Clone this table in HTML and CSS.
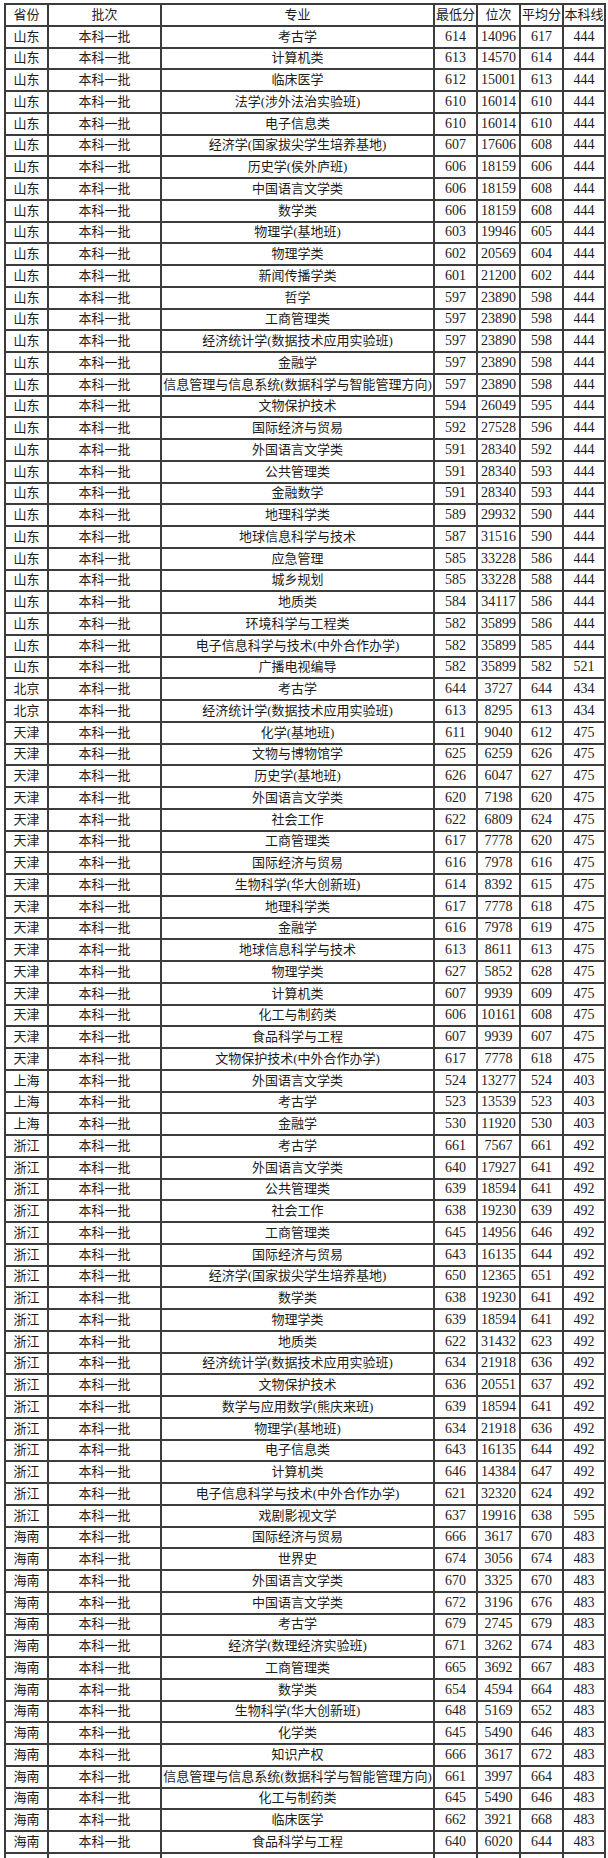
FILE: index.html
```html
<!DOCTYPE html>
<html lang="zh-CN">
<head>
<meta charset="utf-8">
<title>录取分数</title>
<link rel="stylesheet" href="styles.css">
</head>
<body>
<table class="scores">
<colgroup>
<col class="c-prov"><col class="c-batch"><col class="c-major"><col class="c-num"><col class="c-num"><col class="c-num"><col class="c-line">
</colgroup>
<thead>
<tr><th>省份</th><th>批次</th><th>专业</th><th>最低分</th><th>位次</th><th>平均分</th><th>本科线</th></tr>
</thead>
<tbody>
<tr><td>山东</td><td>本科一批</td><td>考古学</td><td>614</td><td>14096</td><td>617</td><td>444</td></tr>
<tr><td>山东</td><td>本科一批</td><td>计算机类</td><td>613</td><td>14570</td><td>614</td><td>444</td></tr>
<tr><td>山东</td><td>本科一批</td><td>临床医学</td><td>612</td><td>15001</td><td>613</td><td>444</td></tr>
<tr><td>山东</td><td>本科一批</td><td>法学(涉外法治实验班)</td><td>610</td><td>16014</td><td>610</td><td>444</td></tr>
<tr><td>山东</td><td>本科一批</td><td>电子信息类</td><td>610</td><td>16014</td><td>610</td><td>444</td></tr>
<tr><td>山东</td><td>本科一批</td><td>经济学(国家拔尖学生培养基地)</td><td>607</td><td>17606</td><td>608</td><td>444</td></tr>
<tr><td>山东</td><td>本科一批</td><td>历史学(侯外庐班)</td><td>606</td><td>18159</td><td>606</td><td>444</td></tr>
<tr><td>山东</td><td>本科一批</td><td>中国语言文学类</td><td>606</td><td>18159</td><td>608</td><td>444</td></tr>
<tr><td>山东</td><td>本科一批</td><td>数学类</td><td>606</td><td>18159</td><td>608</td><td>444</td></tr>
<tr><td>山东</td><td>本科一批</td><td>物理学(基地班)</td><td>603</td><td>19946</td><td>605</td><td>444</td></tr>
<tr><td>山东</td><td>本科一批</td><td>物理学类</td><td>602</td><td>20569</td><td>604</td><td>444</td></tr>
<tr><td>山东</td><td>本科一批</td><td>新闻传播学类</td><td>601</td><td>21200</td><td>602</td><td>444</td></tr>
<tr><td>山东</td><td>本科一批</td><td>哲学</td><td>597</td><td>23890</td><td>598</td><td>444</td></tr>
<tr><td>山东</td><td>本科一批</td><td>工商管理类</td><td>597</td><td>23890</td><td>598</td><td>444</td></tr>
<tr><td>山东</td><td>本科一批</td><td>经济统计学(数据技术应用实验班)</td><td>597</td><td>23890</td><td>598</td><td>444</td></tr>
<tr><td>山东</td><td>本科一批</td><td>金融学</td><td>597</td><td>23890</td><td>598</td><td>444</td></tr>
<tr><td>山东</td><td>本科一批</td><td>信息管理与信息系统(数据科学与智能管理方向)</td><td>597</td><td>23890</td><td>598</td><td>444</td></tr>
<tr><td>山东</td><td>本科一批</td><td>文物保护技术</td><td>594</td><td>26049</td><td>595</td><td>444</td></tr>
<tr><td>山东</td><td>本科一批</td><td>国际经济与贸易</td><td>592</td><td>27528</td><td>596</td><td>444</td></tr>
<tr><td>山东</td><td>本科一批</td><td>外国语言文学类</td><td>591</td><td>28340</td><td>592</td><td>444</td></tr>
<tr><td>山东</td><td>本科一批</td><td>公共管理类</td><td>591</td><td>28340</td><td>593</td><td>444</td></tr>
<tr><td>山东</td><td>本科一批</td><td>金融数学</td><td>591</td><td>28340</td><td>593</td><td>444</td></tr>
<tr><td>山东</td><td>本科一批</td><td>地理科学类</td><td>589</td><td>29932</td><td>590</td><td>444</td></tr>
<tr><td>山东</td><td>本科一批</td><td>地球信息科学与技术</td><td>587</td><td>31516</td><td>590</td><td>444</td></tr>
<tr><td>山东</td><td>本科一批</td><td>应急管理</td><td>585</td><td>33228</td><td>586</td><td>444</td></tr>
<tr><td>山东</td><td>本科一批</td><td>城乡规划</td><td>585</td><td>33228</td><td>588</td><td>444</td></tr>
<tr><td>山东</td><td>本科一批</td><td>地质类</td><td>584</td><td>34117</td><td>586</td><td>444</td></tr>
<tr><td>山东</td><td>本科一批</td><td>环境科学与工程类</td><td>582</td><td>35899</td><td>586</td><td>444</td></tr>
<tr><td>山东</td><td>本科一批</td><td>电子信息科学与技术(中外合作办学)</td><td>582</td><td>35899</td><td>585</td><td>444</td></tr>
<tr><td>山东</td><td>本科一批</td><td>广播电视编导</td><td>582</td><td>35899</td><td>582</td><td>521</td></tr>
<tr><td>北京</td><td>本科一批</td><td>考古学</td><td>644</td><td>3727</td><td>644</td><td>434</td></tr>
<tr><td>北京</td><td>本科一批</td><td>经济统计学(数据技术应用实验班)</td><td>613</td><td>8295</td><td>613</td><td>434</td></tr>
<tr><td>天津</td><td>本科一批</td><td>化学(基地班)</td><td>611</td><td>9040</td><td>612</td><td>475</td></tr>
<tr><td>天津</td><td>本科一批</td><td>文物与博物馆学</td><td>625</td><td>6259</td><td>626</td><td>475</td></tr>
<tr><td>天津</td><td>本科一批</td><td>历史学(基地班)</td><td>626</td><td>6047</td><td>627</td><td>475</td></tr>
<tr><td>天津</td><td>本科一批</td><td>外国语言文学类</td><td>620</td><td>7198</td><td>620</td><td>475</td></tr>
<tr><td>天津</td><td>本科一批</td><td>社会工作</td><td>622</td><td>6809</td><td>624</td><td>475</td></tr>
<tr><td>天津</td><td>本科一批</td><td>工商管理类</td><td>617</td><td>7778</td><td>620</td><td>475</td></tr>
<tr><td>天津</td><td>本科一批</td><td>国际经济与贸易</td><td>616</td><td>7978</td><td>616</td><td>475</td></tr>
<tr><td>天津</td><td>本科一批</td><td>生物科学(华大创新班)</td><td>614</td><td>8392</td><td>615</td><td>475</td></tr>
<tr><td>天津</td><td>本科一批</td><td>地理科学类</td><td>617</td><td>7778</td><td>618</td><td>475</td></tr>
<tr><td>天津</td><td>本科一批</td><td>金融学</td><td>616</td><td>7978</td><td>619</td><td>475</td></tr>
<tr><td>天津</td><td>本科一批</td><td>地球信息科学与技术</td><td>613</td><td>8611</td><td>613</td><td>475</td></tr>
<tr><td>天津</td><td>本科一批</td><td>物理学类</td><td>627</td><td>5852</td><td>628</td><td>475</td></tr>
<tr><td>天津</td><td>本科一批</td><td>计算机类</td><td>607</td><td>9939</td><td>609</td><td>475</td></tr>
<tr><td>天津</td><td>本科一批</td><td>化工与制药类</td><td>606</td><td>10161</td><td>608</td><td>475</td></tr>
<tr><td>天津</td><td>本科一批</td><td>食品科学与工程</td><td>607</td><td>9939</td><td>607</td><td>475</td></tr>
<tr><td>天津</td><td>本科一批</td><td>文物保护技术(中外合作办学)</td><td>617</td><td>7778</td><td>618</td><td>475</td></tr>
<tr><td>上海</td><td>本科一批</td><td>外国语言文学类</td><td>524</td><td>13277</td><td>524</td><td>403</td></tr>
<tr><td>上海</td><td>本科一批</td><td>考古学</td><td>523</td><td>13539</td><td>523</td><td>403</td></tr>
<tr><td>上海</td><td>本科一批</td><td>金融学</td><td>530</td><td>11920</td><td>530</td><td>403</td></tr>
<tr><td>浙江</td><td>本科一批</td><td>考古学</td><td>661</td><td>7567</td><td>661</td><td>492</td></tr>
<tr><td>浙江</td><td>本科一批</td><td>外国语言文学类</td><td>640</td><td>17927</td><td>641</td><td>492</td></tr>
<tr><td>浙江</td><td>本科一批</td><td>公共管理类</td><td>639</td><td>18594</td><td>641</td><td>492</td></tr>
<tr><td>浙江</td><td>本科一批</td><td>社会工作</td><td>638</td><td>19230</td><td>639</td><td>492</td></tr>
<tr><td>浙江</td><td>本科一批</td><td>工商管理类</td><td>645</td><td>14956</td><td>646</td><td>492</td></tr>
<tr><td>浙江</td><td>本科一批</td><td>国际经济与贸易</td><td>643</td><td>16135</td><td>644</td><td>492</td></tr>
<tr><td>浙江</td><td>本科一批</td><td>经济学(国家拔尖学生培养基地)</td><td>650</td><td>12365</td><td>651</td><td>492</td></tr>
<tr><td>浙江</td><td>本科一批</td><td>数学类</td><td>638</td><td>19230</td><td>641</td><td>492</td></tr>
<tr><td>浙江</td><td>本科一批</td><td>物理学类</td><td>639</td><td>18594</td><td>641</td><td>492</td></tr>
<tr><td>浙江</td><td>本科一批</td><td>地质类</td><td>622</td><td>31432</td><td>623</td><td>492</td></tr>
<tr><td>浙江</td><td>本科一批</td><td>经济统计学(数据技术应用实验班)</td><td>634</td><td>21918</td><td>636</td><td>492</td></tr>
<tr><td>浙江</td><td>本科一批</td><td>文物保护技术</td><td>636</td><td>20551</td><td>637</td><td>492</td></tr>
<tr><td>浙江</td><td>本科一批</td><td>数学与应用数学(熊庆来班)</td><td>639</td><td>18594</td><td>641</td><td>492</td></tr>
<tr><td>浙江</td><td>本科一批</td><td>物理学(基地班)</td><td>634</td><td>21918</td><td>636</td><td>492</td></tr>
<tr><td>浙江</td><td>本科一批</td><td>电子信息类</td><td>643</td><td>16135</td><td>644</td><td>492</td></tr>
<tr><td>浙江</td><td>本科一批</td><td>计算机类</td><td>646</td><td>14384</td><td>647</td><td>492</td></tr>
<tr><td>浙江</td><td>本科一批</td><td>电子信息科学与技术(中外合作办学)</td><td>621</td><td>32320</td><td>624</td><td>492</td></tr>
<tr><td>浙江</td><td>本科一批</td><td>戏剧影视文学</td><td>637</td><td>19916</td><td>638</td><td>595</td></tr>
<tr><td>海南</td><td>本科一批</td><td>国际经济与贸易</td><td>666</td><td>3617</td><td>670</td><td>483</td></tr>
<tr><td>海南</td><td>本科一批</td><td>世界史</td><td>674</td><td>3056</td><td>674</td><td>483</td></tr>
<tr><td>海南</td><td>本科一批</td><td>外国语言文学类</td><td>670</td><td>3325</td><td>670</td><td>483</td></tr>
<tr><td>海南</td><td>本科一批</td><td>中国语言文学类</td><td>672</td><td>3196</td><td>676</td><td>483</td></tr>
<tr><td>海南</td><td>本科一批</td><td>考古学</td><td>679</td><td>2745</td><td>679</td><td>483</td></tr>
<tr><td>海南</td><td>本科一批</td><td>经济学(数理经济实验班)</td><td>671</td><td>3262</td><td>674</td><td>483</td></tr>
<tr><td>海南</td><td>本科一批</td><td>工商管理类</td><td>665</td><td>3692</td><td>667</td><td>483</td></tr>
<tr><td>海南</td><td>本科一批</td><td>数学类</td><td>654</td><td>4594</td><td>664</td><td>483</td></tr>
<tr><td>海南</td><td>本科一批</td><td>生物科学(华大创新班)</td><td>648</td><td>5169</td><td>652</td><td>483</td></tr>
<tr><td>海南</td><td>本科一批</td><td>化学类</td><td>645</td><td>5490</td><td>646</td><td>483</td></tr>
<tr><td>海南</td><td>本科一批</td><td>知识产权</td><td>666</td><td>3617</td><td>672</td><td>483</td></tr>
<tr><td>海南</td><td>本科一批</td><td>信息管理与信息系统(数据科学与智能管理方向)</td><td>661</td><td>3997</td><td>664</td><td>483</td></tr>
<tr><td>海南</td><td>本科一批</td><td>化工与制药类</td><td>645</td><td>5490</td><td>646</td><td>483</td></tr>
<tr><td>海南</td><td>本科一批</td><td>临床医学</td><td>662</td><td>3921</td><td>668</td><td>483</td></tr>
<tr><td>海南</td><td>本科一批</td><td>食品科学与工程</td><td>640</td><td>6020</td><td>644</td><td>483</td></tr>
<tr class="tail"><td></td><td></td><td></td><td></td><td></td><td></td><td></td></tr>
</tbody>
</table>
</body>
</html>
```

FILE: styles.css
```css
html, body {
  margin: 0;
  padding: 0;
  background: #fff;
}

body {
  padding: 3px 4px 0 4px;
}

.scores {
  width: 600px;
  table-layout: fixed;
  border-collapse: collapse;
  font-family: "Liberation Serif", "Noto Sans CJK SC", serif;
  font-size: 13px;
  color: #1c1c1c;
}

.c-prov { width: 43px; }
.c-batch { width: 113px; }
.c-major { width: 273px; }
.c-num { width: 43px; }
.c-line { width: 42px; }

.scores th,
.scores td {
  height: 19.76px;
  padding: 0;
  border: 2px solid #3c3c3c;
  text-align: center;
  vertical-align: middle;
  font-weight: normal;
  line-height: 16px;
  white-space: nowrap;
  overflow: hidden;
}

.scores td:nth-child(n+4) {
  font-size: 14px;
}
```
